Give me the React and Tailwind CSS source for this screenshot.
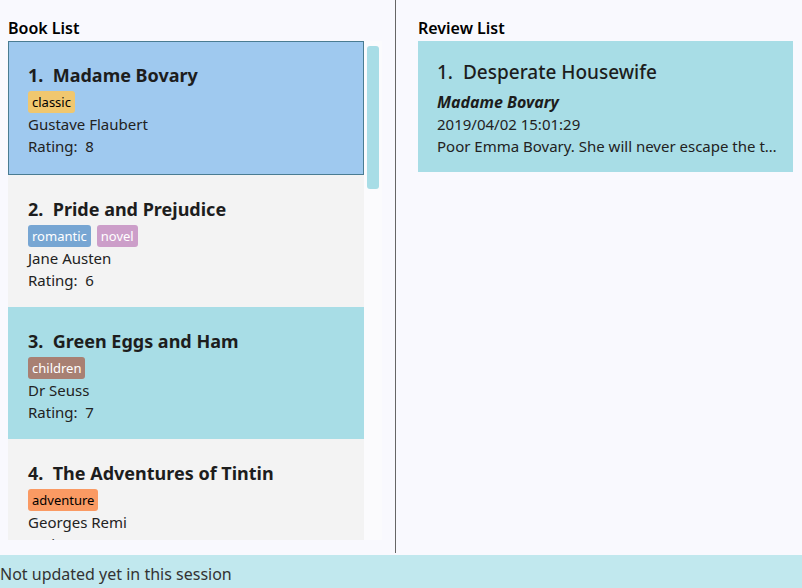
const TAG_STYLES = {
  classic: 'bg-[#f0c76f] text-black',
  romantic: 'bg-[#77a6d3] text-white',
  novel: 'bg-[#cc9ec9] text-white',
  children: 'bg-[#a88073] text-white',
  adventure: 'bg-[#fa9a63] text-black',
};

const BOOKS = [
  { id: 1, title: 'Madame Bovary', tags: ['classic'], author: 'Gustave Flaubert', rating: 8, bg: 'h-[134px] bg-[#9fc9ef] border border-[#4a7c92]' },
  { id: 2, title: 'Pride and Prejudice', tags: ['romantic', 'novel'], author: 'Jane Austen', rating: 6, bg: 'h-[132px] bg-[#f3f3f3] border border-transparent' },
  { id: 3, title: 'Green Eggs and Ham', tags: ['children'], author: 'Dr Seuss', rating: 7, bg: 'h-[132px] bg-[#a8dde6] border border-transparent' },
  { id: 4, title: 'The Adventures of Tintin', tags: ['adventure'], author: 'Georges Remi', rating: 5, bg: 'h-[132px] bg-[#f3f3f3] border border-transparent' },
];

function BookCard({ book }) {
  return (
    <div className={`shrink-0 pl-[19px] pt-[21px] ${book.bg}`}>
      <h3 className="text-[18px] leading-[24px] font-bold text-[#1d1d1d] whitespace-pre">{book.id}.  {book.title}</h3>
      <div className="flex gap-[6px] mt-[4px]">
        {book.tags.map((t) => (
          <span key={t} className={`h-[22px] px-[4px] rounded-[3px] text-[13px] leading-[22px] ${TAG_STYLES[t]}`}>{t}</span>
        ))}
      </div>
      <p className="text-[15px] leading-[22px] text-[#222]">{book.author}</p>
      <p className="text-[15px] leading-[22px] text-[#222] whitespace-pre">Rating:  {book.rating}</p>
    </div>
  );
}

export default function App() {
  return (
    <div className="w-[802px] h-[588px] flex flex-col bg-[#f9f9fe] overflow-hidden" style={{ fontFamily: '"Noto Sans", "Open Sans", sans-serif' }}>
      <div className="flex h-[555px] shrink-0">
        {/* Book list */}
        <div className="w-[395px] shrink-0 pl-[8px] pt-[16px] flex flex-col">
          <h2 className="text-[16px] leading-[24px] font-semibold text-black">Book List</h2>
          <div className="flex h-[499px] mt-[1px]">
            <div className="w-[356px] flex flex-col overflow-hidden">
              {BOOKS.map((b) => <BookCard key={b.id} book={b} />)}
            </div>
            <div className="w-[18px] bg-[#fbfbfd] pt-[5px] flex justify-center">
              <div className="w-[12px] h-[143px] rounded-[3px] bg-[#a8dde6]" />
            </div>
          </div>
        </div>
        <div className="w-px shrink-0 h-[553px] bg-[#666]" />
        {/* Review list */}
        <div className="flex-1 min-w-0 pl-[22px] pr-[9px] pt-[16px]">
          <h2 className="text-[16px] leading-[24px] font-semibold text-black">Review List</h2>
          <div className="mt-[1px] h-[131px] bg-[#a8dde6] pl-[19px] pr-[12px] pt-[19px]">
            <h3 className="text-[19px] leading-[24px] font-medium text-[#1d1d1d] whitespace-pre">1.  Desperate Housewife</h3>
            <p className="text-[16px] leading-[22px] font-bold italic text-[#1d1d1d] mt-[7px]">Madame Bovary</p>
            <p className="text-[15px] leading-[22px] text-[#222]">2019/04/02 15:01:29</p>
            <p className="text-[15px] leading-[22px] text-[#222] truncate">Poor Emma Bovary. She will never escape the tragedy of her own romantic delusions.</p>
          </div>
        </div>
      </div>
      <div className="h-[33px] bg-[#c1e8ee] flex items-center pt-[4px] text-[16px] text-[#333]">Not updated yet in this session</div>
    </div>
  );
}
